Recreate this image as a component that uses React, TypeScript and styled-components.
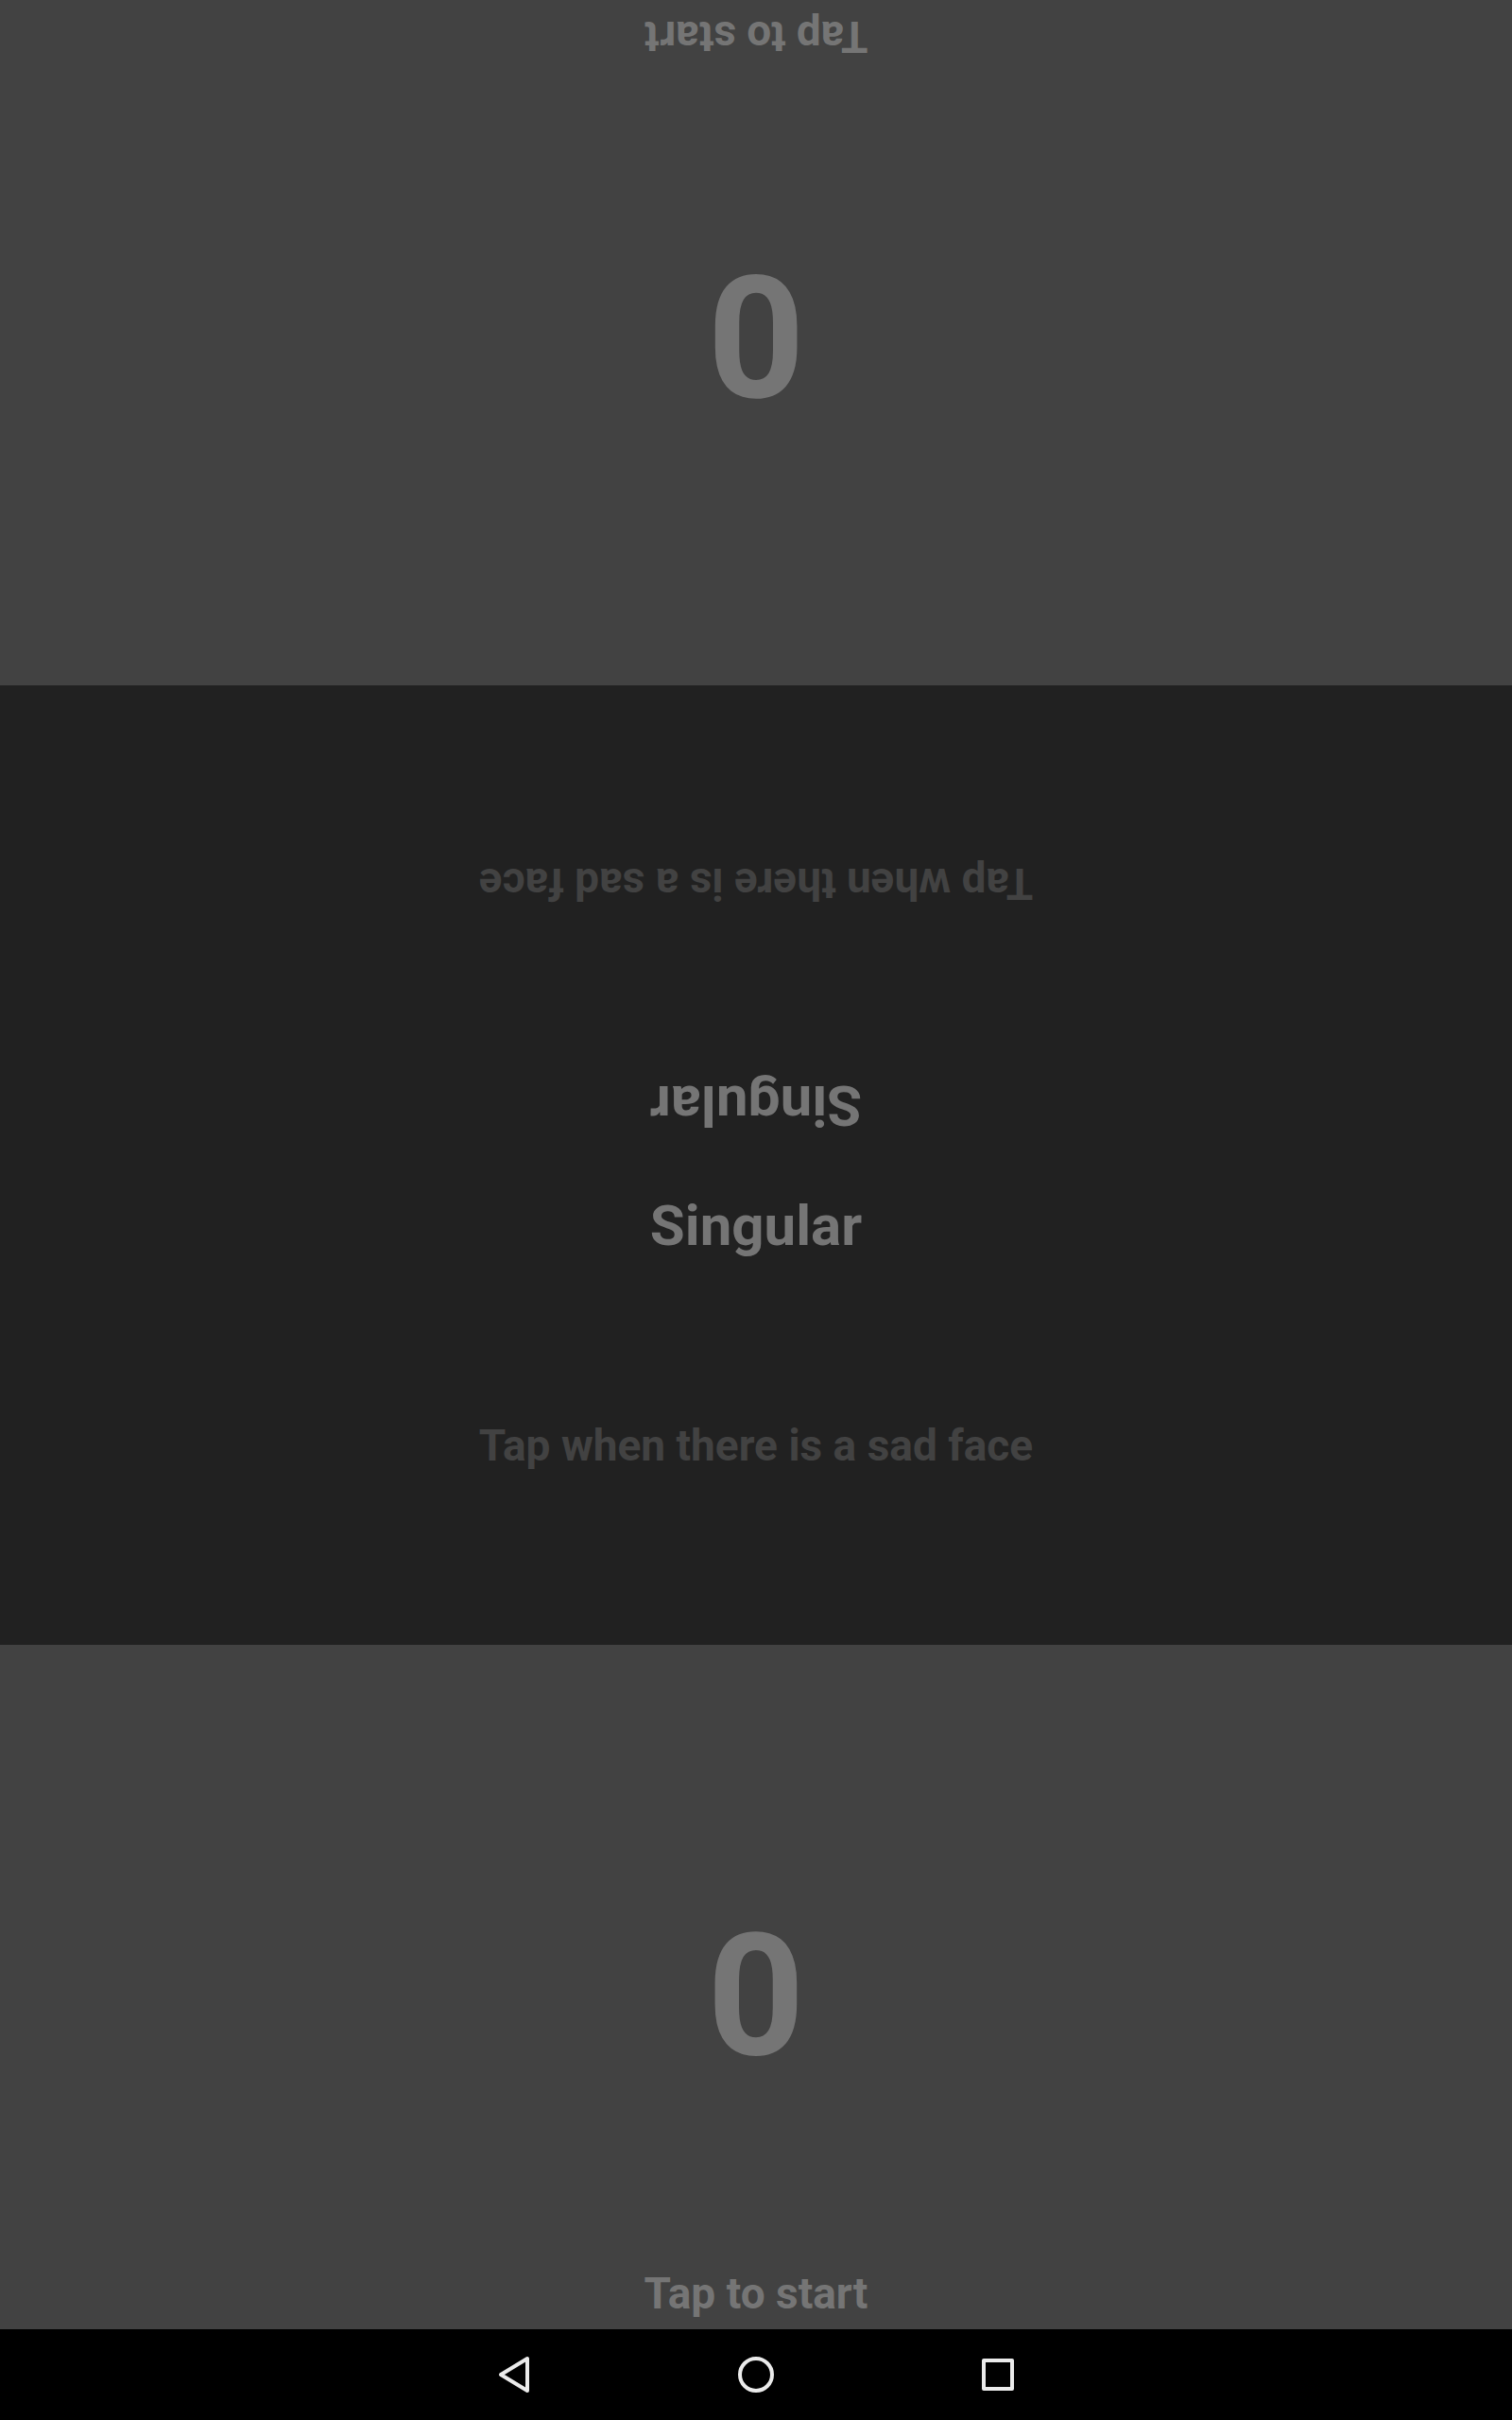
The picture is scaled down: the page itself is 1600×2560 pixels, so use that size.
import React from "react";
import styled, { createGlobalStyle } from "styled-components";

const Global = createGlobalStyle`
  body { margin: 0; background: #000; }
`;

const Screen = styled.main`
  display: flex;
  flex-direction: column;
  width: 1600px;
  height: 2560px;
  overflow: hidden;
  font-family: Roboto, sans-serif;
  font-weight: 700;
`;

const PlayerZone = styled.section<{ $flipped?: boolean }>`
  box-sizing: border-box;
  display: flex;
  flex-direction: column;
  height: ${(p) => (p.$flipped ? 725 : 724)}px;
  padding-bottom: ${(p) => (p.$flipped ? 12 : 11)}px;
  background: #424242;
  color: #757575;
  transform: ${(p) => (p.$flipped ? "rotate(180deg)" : "none")};
`;

const Score = styled.div`
  flex: 1;
  padding-top: 266px;
  font-size: 180px;
  line-height: 211px;
  text-align: center;
`;

const Hint = styled.div`
  font-size: 46px;
  line-height: 54px;
  text-align: center;
`;

const Board = styled.section`
  display: flex;
  flex-direction: column;
  height: 1015px;
  background: #212121;
`;

const BoardSide = styled.div<{ $flipped?: boolean }>`
  box-sizing: border-box;
  display: flex;
  flex-direction: column;
  align-items: center;
  gap: ${(p) => (p.$flipped ? 172 : 170)}px;
  height: ${(p) => (p.$flipped ? 507 : 508)}px;
  padding-top: ${(p) => (p.$flipped ? 27 : 29)}px;
  transform: ${(p) => (p.$flipped ? "rotate(180deg)" : "none")};
`;

const Title = styled.h1`
  margin: 0;
  color: #757575;
  font-size: 60px;
  line-height: 71px;
`;

const Rule = styled.p`
  margin: 0;
  color: #424242;
  font-size: 46px;
  line-height: 54px;
`;

const NavBar = styled.nav`
  display: flex;
  justify-content: center;
  gap: 160px;
  height: 96px;
  background: #000;
`;

const NavButton = styled.button`
  width: 96px;
  height: 96px;
  padding: 0;
  border: 0;
  background: none;
  color: #ebebeb;
`;

const Icon = styled.svg`
  display: block;
  fill: none;
  stroke: currentColor;
  stroke-width: 4;
  stroke-linejoin: round;
`;

export default function App() {
  return (
    <Screen>
      <Global />
      <PlayerZone $flipped>
        <Score>0</Score>
        <Hint>Tap to start</Hint>
      </PlayerZone>
      <Board>
        <BoardSide $flipped>
          <Title>Singular</Title>
          <Rule>Tap when there is a sad face</Rule>
        </BoardSide>
        <BoardSide>
          <Title>Singular</Title>
          <Rule>Tap when there is a sad face</Rule>
        </BoardSide>
      </Board>
      <PlayerZone>
        <Score>0</Score>
        <Hint>Tap to start</Hint>
      </PlayerZone>
      <NavBar>
        <NavButton aria-label="Back">
          <Icon width="96" height="96"><path d="M34 48 L62 31 V65 Z" /></Icon>
        </NavButton>
        <NavButton aria-label="Home">
          <Icon width="96" height="96"><circle cx="48" cy="48" r="17" /></Icon>
        </NavButton>
        <NavButton aria-label="Recent apps">
          <Icon width="96" height="96"><rect x="33" y="33" width="30" height="30" /></Icon>
        </NavButton>
      </NavBar>
    </Screen>
  );
}
